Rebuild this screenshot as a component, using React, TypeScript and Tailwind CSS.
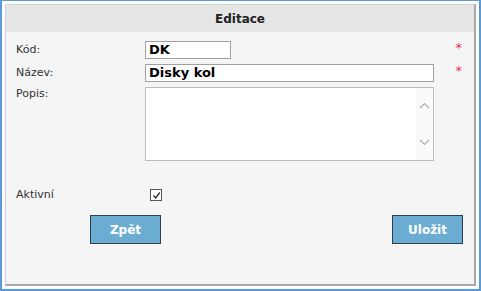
export default function App() {
  return (
    <div className="w-[481px] h-[291px] bg-white border-[#5b9bd5] border-x-2 border-t border-b-2 p-[3px] font-['DejaVu_Sans',sans-serif] text-[11px] text-[#333]">
      <div className="h-full flex flex-col border border-[#d0d0d0] border-r-[#a8a8a8] border-b-[#a8a8a8] border-r-2 border-b-2 bg-[#f5f5f5]">
        {/* Header */}
        <div className="h-[27px] flex items-center justify-center bg-[#e6e6e6] font-bold text-[12px] text-[#222]">
          Editace
        </div>

        {/* Form */}
        <div className="pl-[10px] pt-[9px] flex flex-col">
          <div className="flex items-center h-[18px]">
            <div className="w-[129px]">Kód:</div>
            <div className="w-[86px] h-[18px] bg-white border border-[#a0a0a0] px-[3px] flex items-center font-bold text-[13px] text-black">DK</div>
            <div className="ml-auto mr-[12px] text-[#e8304a] text-[13px] -mt-[4px]">*</div>
          </div>
          <div className="flex items-center h-[18px] mt-[5px]">
            <div className="w-[129px]">Název:</div>
            <div className="w-[289px] h-[18px] bg-white border border-[#a0a0a0] px-[3px] flex items-center font-bold text-[13px] text-black">Disky kol</div>
            <div className="ml-auto mr-[12px] text-[#e8304a] text-[13px] -mt-[4px]">*</div>
          </div>
          <div className="flex items-start mt-[5px]">
            <div className="w-[129px] -mt-[1px]">Popis:</div>
            <div className="w-[289px] h-[74px] bg-white border border-[#bcbcbc] flex justify-end">
              <div className="w-[17px] h-full bg-[#fafafa] flex flex-col items-center justify-between py-[14px]">
                <svg width="11" height="7" viewBox="0 0 11 7" fill="none" stroke="#b0b0b0" strokeWidth="1.2">
                  <path d="M1 6 L5.5 1.5 L10 6" />
                </svg>
                <svg width="11" height="7" viewBox="0 0 11 7" fill="none" stroke="#b0b0b0" strokeWidth="1.2">
                  <path d="M1 1 L5.5 5.5 L10 1" />
                </svg>
              </div>
            </div>
          </div>
          <div className="flex items-center mt-[27px] h-[14px]">
            <div className="w-[134px]">Aktivní</div>
            <div className="w-[12px] h-[12px] border border-[#555] bg-white flex items-center justify-center">
              <svg width="9" height="9" viewBox="0 0 9 9" fill="none" stroke="#333" strokeWidth="1.4">
                <path d="M1.5 4.5 L3.7 7 L7.8 1.5" />
              </svg>
            </div>
          </div>
          <div className="flex justify-between mt-[13px] pl-[74px] pr-[11px]">
            <button className="w-[71px] h-[29px] bg-[#6badd2] border border-[#2e3f52] text-white font-bold text-[12px]">Zpět</button>
            <button className="w-[71px] h-[29px] bg-[#6badd2] border border-[#2e3f52] text-white font-bold text-[12px]">Uložit</button>
          </div>
        </div>
      </div>
    </div>
  );
}
